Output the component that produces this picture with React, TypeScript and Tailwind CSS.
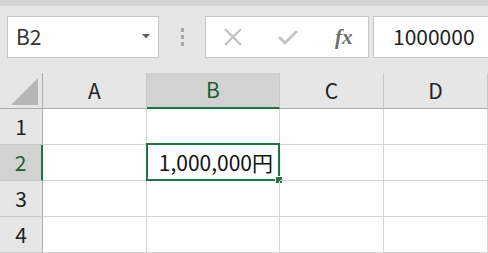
import React from 'react'

const font = { fontFamily: '"Noto Sans CJK JP", "Noto Sans", sans-serif' }

const cols = ['A', 'B', 'C', 'D', '']
const rows = [1, 2, 3, 4]

function ColHeader({ label, selected }: { label: string; selected?: boolean }) {
  return (
    <div
      className={`flex items-center justify-center border-r border-[#c8c8c8] text-[21px] ${
        selected
          ? 'bg-[#d2d2d2] border-b-2 border-b-[#217346] text-[#1d5d38]'
          : 'bg-[#e6e6e6] border-b border-b-[#acacac] text-[#222]'
      }`}
    >
      {label}
    </div>
  )
}

function RowHeader({ n, selected }: { n: number; selected?: boolean }) {
  return (
    <div
      className={`flex items-center justify-center border-b border-[#c8c8c8] text-[21px] ${
        selected
          ? 'bg-[#d2d2d2] border-r-2 border-r-[#217346] text-[#1d5d38]'
          : 'bg-[#e6e6e6] border-r border-r-[#acacac] text-[#222]'
      }`}
    >
      {n}
    </div>
  )
}

export default function App() {
  return (
    <div className="w-[488px] h-[253px] overflow-hidden bg-[#e6e6e6] flex flex-col" style={font}>
      {/* top stripe */}
      <div className="h-[6px] bg-[#d5d5d5] shrink-0" />

      {/* name box + formula bar */}
      <div className="h-[67px] shrink-0 flex items-start pt-[10px] pl-[7px]">
        <div className="w-[152px] h-[42px] bg-white border border-[#c6c6c6] flex items-center justify-between pl-[8px] pr-[8px]">
          <span className="text-[21px] text-[#333]">B2</span>
          <svg width="8" height="5" viewBox="0 0 8 5" className="mb-[2px]">
            <path d="M0 0 L8 0 L4 4.5 Z" fill="#5f5f5f" />
          </svg>
        </div>
        <div className="w-[46px] h-[42px] flex flex-col items-center justify-center gap-[3px]">
          <div className="w-[3px] h-[4px] bg-[#a6a6a6]" />
          <div className="w-[3px] h-[4px] bg-[#a6a6a6]" />
          <div className="w-[3px] h-[4px] bg-[#a6a6a6]" />
        </div>
        <div className="w-[164px] h-[42px] bg-white border border-[#c6c6c6] flex items-center">
          <svg width="18" height="18" viewBox="0 0 18 18" className="ml-[18px]">
            <path d="M1 1 L17 17 M17 1 L1 17" stroke="#c0c0c0" strokeWidth="2.2" />
          </svg>
          <svg width="20" height="16" viewBox="0 0 20 16" className="ml-[36px]">
            <path d="M1 8 L7 14 L19 2" stroke="#c4c4c4" strokeWidth="3" fill="none" />
          </svg>
          <span
            className="ml-[37px] text-[21px] italic font-bold text-[#6e6e6e] leading-none"
            style={{ fontFamily: '"Liberation Serif", "DejaVu Serif", serif' }}
          >
            fx
          </span>
        </div>
        <div className="ml-[4px] flex-1 h-[42px] bg-white border-y border-l border-[#c6c6c6] flex items-center pl-[19px]">
          <span className="text-[21px] text-[#222]">1000000</span>
        </div>
      </div>

      {/* grid */}
      <div className="grid grid-cols-[43px_104px_133px_104px_104px_1fr] grid-rows-[36px_36px_36px_36px_36px] bg-white">
        <div className="bg-[#e6e6e6] border-r border-b border-[#acacac] flex items-end justify-end pr-[3px] pb-[3px]">
          <svg width="28" height="27" viewBox="0 0 28 27">
            <path d="M27 0 L27 27 L0 27 Z" fill="#b6b6b6" />
          </svg>
        </div>
        {cols.map((c, i) => (
          <ColHeader key={i} label={c} selected={c === 'B'} />
        ))}
        {rows.map((r) => (
          <React.Fragment key={r}>
            <RowHeader n={r} selected={r === 2} />
            {cols.map((c, i) => (
              <div key={i} className="relative border-r border-b border-[#d4d4d4]">
                {r === 2 && c === 'B' && (
                  <>
                    <div className="absolute left-[-1px] top-[-2px] right-[-1px] bottom-[-1px] border-2 border-[#217346]" />
                    <div className="absolute right-[-4px] bottom-[-4px] w-[6px] h-[6px] bg-[#217346] border border-white box-content" />
                    <div className="absolute inset-0 flex items-center justify-end pr-[6px] text-[21px] text-[#111]">
                      1,000,000円
                    </div>
                  </>
                )}
              </div>
            ))}
          </React.Fragment>
        ))}
      </div>
    </div>
  )
}
